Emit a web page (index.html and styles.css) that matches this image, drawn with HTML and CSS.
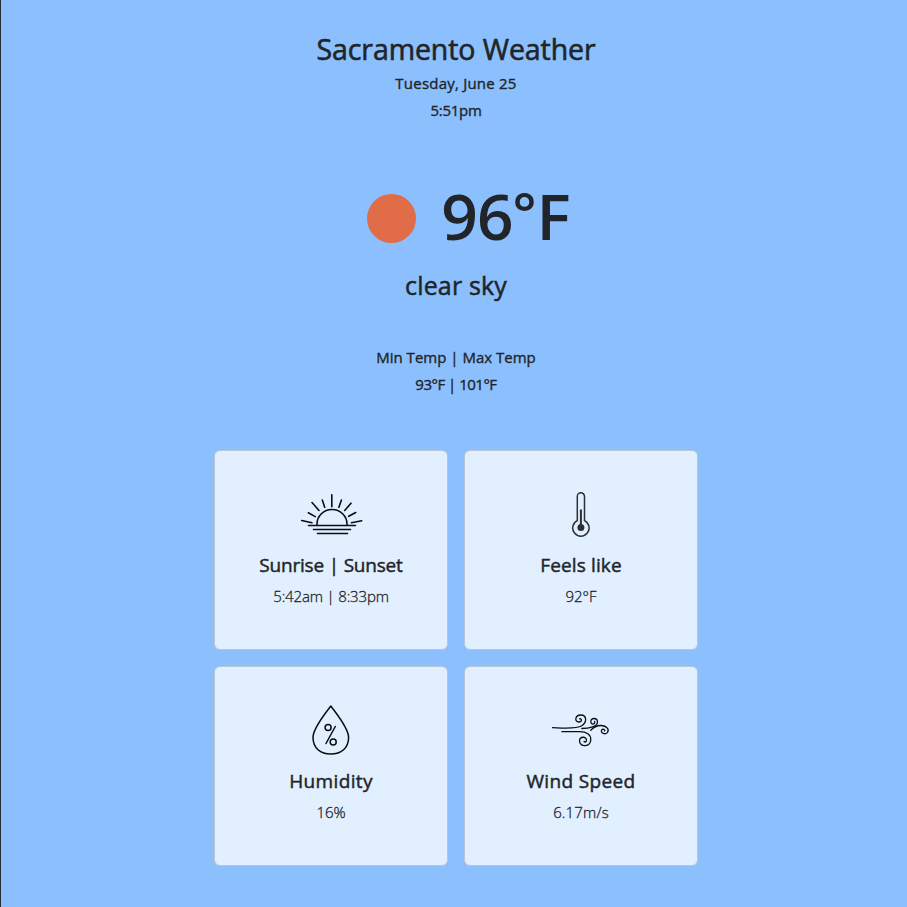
FILE: index.html
```html
<!DOCTYPE html>
<html lang="en">
<head>
<meta charset="utf-8">
<title>Sacramento Weather</title>
<link rel="stylesheet" href="styles.css">
</head>
<body>
<main class="app">
  <header class="head">
    <h1 class="city">Sacramento Weather</h1>
    <p class="line date">Tuesday, June 25</p>
    <p class="line time">5:51pm</p>
  </header>
  <section class="now">
    <span class="sun"></span>
    <span class="temp">96<span class="deg">°</span>F</span>
  </section>
  <p class="desc">clear sky</p>
  <section class="range">
    <p class="line minmax">Min Temp | Max Temp</p>
    <p class="line temps">93°F | 101°F</p>
  </section>
  <section class="grid">
    <article class="card">
      <svg class="icon" viewBox="-1 0 84 64" fill="none" stroke="#0b0d10" stroke-width="1.6" stroke-linecap="round">
        <path d="M26 45v-1a15 14.5 0 0 1 30 0v1M17.500 45.5H64.500M22.5 49.5H59.5M26.500 53.500H56.500M40.8 14.7v12M31.3 20l2.4 7.3M50.4 20l-2.5 7.3M21 22.5l7 8M60 23.2l-6.3 7.3M17.3 32.8l7 3.8M64.7 32.5l-7 3.8M10.7 40.5l10.2 2.3M70.7 40.7l-10.2 2.1" transform="translate(1 0)"/>
      </svg>
      <h2 class="name sunrise">Sunrise | Sunset</h2>
      <p class="value v-sun">5:42am | 8:33pm</p>
    </article>
    <article class="card">
      <svg class="icon" viewBox="-11 0 84 64" fill="none" stroke="#2c2f33" stroke-width="1.5" stroke-linecap="round">
        <path d="M27.3 40.6V16.4a3.6 3.6 0 0 1 7.2 0v24.2a8.2 8.2 0 1 1-7.2 0Z"/>
        <path d="M30.9 29.5V47" stroke-width="2" stroke-linecap="butt"/>
        <circle cx="30.9" cy="47.5" r="3.5" fill="#2c2f33" stroke="none"/>
      </svg>
      <h2 class="name feels">Feels like</h2>
      <p class="value v-feels">92°F</p>
    </article>
    <article class="card">
      <svg class="icon" viewBox="-11 0 84 64" fill="none" stroke="#0b0d10" stroke-width="1.5" stroke-linejoin="round" stroke-linecap="round">
        <path d="M30.8 10C25 18 13 32 13 41.500C13 52 20.500 58 30.800 58S48.600 52 48.600 41.500C48.600 32 36.600 18 30.800 10Z"/>
        <circle cx="28.1" cy="31.4" r="3"/><circle cx="33.2" cy="46" r="3"/><path d="M35.300 30.500L26 47.500"/>
      </svg>
      <h2 class="name humid">Humidity</h2>
      <p class="value v-humid">16%</p>
    </article>
    <article class="card">
      <svg class="icon" viewBox="-1.3 -4 84 64" fill="none" stroke="#0b0d10" stroke-width="1.3" stroke-linecap="round">
        <path d="M12.300 27.700C24 28.200 36 29.300 41.500 25.800C47 22 46.500 15 40.500 15C34.500 15 34 22 38.500 22C42 22 41.800 18.400 39.300 18.800"/>
        <path d="M41.500 28.500C49 28.500 57.300 26.500 57.200 22C57 17.200 50.400 17.500 50.500 21.700C50.600 25 55 24.800 54.400 21.500"/>
        <path d="M50.500 30.300C54 26.500 57.500 25.300 61 25.500C66.800 25.800 69.300 30 67 32.600C64.500 35.300 60 32.500 61.300 30.200C62.500 28.300 65 29.500 64.300 31"/>
        <path d="M21.500 31.600H39C46.500 31.500 50.600 34.700 50.500 39.500C50.300 47.300 39.300 47.500 39.200 41C39.300 36 46.300 36.200 46.200 40.400C46 42 44.700 42.500 43.800 41.500"/>
      </svg>
      <h2 class="name wind">Wind Speed</h2>
      <p class="value v-wind">6.17m/s</p>
    </article>
  </section>
</main>
</body>
</html>
```
FILE: styles.css
```css
* { box-sizing: border-box; margin: 0; }
body {
  min-height: 100vh;
  background: #8cbffd;
  border-left: 1px solid #2a2d35;
  padding-left: 4px;
  color: #212529;
  font-family: "Open Sans", "Noto Sans", sans-serif;
  text-align: center;
}
.app { display: flex; flex-direction: column; align-items: center; padding-top: 29px; }
.head { height: 157px; }
.city { font-size: 28.5px; line-height: 40px; font-weight: 500; letter-spacing: -0.09px; margin-bottom: 1px; -webkit-text-stroke: 0.6px; }
.line { font-size: 15px; line-height: 27px; font-weight: 500; white-space: nowrap; -webkit-text-stroke: 0.35px; }
.date { letter-spacing: 0.22px; }
.time { letter-spacing: -0.3px; }
.temps { letter-spacing: -0.5px; }
.now { display: flex; align-items: center; gap: 25px; height: 65px; padding-left: 25px; }
.sun { width: 49px; height: 49px; border-radius: 50%; background: #e06d48; }
.temp { font-size: 64px; line-height: 64px; font-weight: 600; letter-spacing: -1px; padding-bottom: 5px; }
.deg { font-size: 56px; line-height: 0; vertical-align: 6px; letter-spacing: 0; }
.desc { font-size: 25px; line-height: 36px; font-weight: 500; margin-top: 16px; letter-spacing: 0.15px; -webkit-text-stroke: 0.5px; }
.range { margin-top: 41px; }
.grid { display: grid; grid-template-columns: 234px 234px; grid-auto-rows: 200px; gap: 16px; margin-top: 52px; }
.card {
  display: flex; flex-direction: column; align-items: center;
  padding-top: 29px;
  background: #e1efff;
  border: 1px solid #b9c5d3;
  border-radius: 6px;
}
.icon { width: 84px; height: 64px; flex: none; }
.name { font-size: 19px; line-height: 28px; font-weight: 500; margin-top: 7px; white-space: nowrap; -webkit-text-stroke: 0.45px; }
.sunrise { letter-spacing: -0.2px; }
.feels { letter-spacing: 0.12px; }
.humid, .wind { letter-spacing: 0.35px; }
.value { font-size: 15px; line-height: 24px; font-weight: 300; margin-top: 5px; white-space: nowrap; -webkit-text-stroke: 0.3px; }
.v-sun { letter-spacing: -0.15px; }
.v-wind { letter-spacing: 0.15px; }
```
